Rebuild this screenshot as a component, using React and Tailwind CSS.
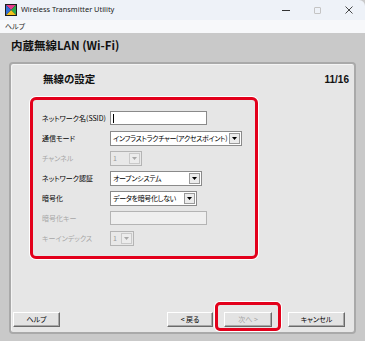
import React from "react";

const jp = "font-['Noto_Sans_CJK_JP','Noto_Sans',sans-serif] [font-feature-settings:'palt']";

const AppIcon = () => (
  <svg width="12" height="12" viewBox="0 0 12 12">
    <rect x="0" y="0" width="12" height="12" fill="#1b1b1b" />
    <polygon points="1,1 11,1 6,6" fill="#e83a8c" />
    <polygon points="11,1 11,11 6,6" fill="#2aa84a" />
    <polygon points="11,11 1,11 6,6" fill="#f2c21b" />
    <polygon points="1,11 1,1 6,6" fill="#2e6fd8" />
  </svg>
);

const Arrow = ({ disabled }) => (
  <span
    className={`ml-auto flex h-[11px] w-[11px] shrink-0 items-center justify-center border ${
      disabled ? "border-[#c9c9c9] bg-[#ececec]" : "border-[#9a9a9a] bg-[#ececec]"
    }`}
  >
    <svg width="5" height="3" viewBox="0 0 5 3">
      <polygon points="0,0 5,0 2.5,3" fill={disabled ? "#a8a8a8" : "#000"} />
    </svg>
  </span>
);

const Select = ({ value, width, disabled }) => (
  <div
    className={`flex h-[15px] items-center overflow-hidden border pl-[2px] pr-[1px] text-[7px] leading-none ${
      disabled
        ? "border-[#b4b4b4] bg-[#e8e8e8] text-[#9a9a9a]"
        : "border-[#8a8a8a] bg-white text-black"
    }`}
    style={{ width }}
  >
    <span className="min-w-0 whitespace-nowrap tracking-[-0.35px]">{value}</span>
    <Arrow disabled={disabled} />
  </div>
);

const Input = ({ disabled }) => (
  <div
    className={`h-[14px] w-[97px] border ${
      disabled ? "border-[#b4b4b4] bg-[#efefef]" : "border-[#8a8a8a] bg-white"
    } flex items-center pl-[2px]`}
  >
    {!disabled && <span className="h-[9px] w-px bg-black" />}
  </div>
);

const rows = [
  { label: "ネットワーク名(SSID)", ctrl: <Input /> },
  { label: "通信モード", ctrl: <Select value="インフラストラクチャー(アクセスポイント)" width={132} /> },
  { label: "チャンネル", disabled: true, ctrl: <Select value="1" width={32} disabled /> },
  { label: "ネットワーク認証", ctrl: <Select value="オープンシステム" width={92} /> },
  { label: "暗号化", ctrl: <Select value="データを暗号化しない" width={87} /> },
  { label: "暗号化キー", disabled: true, ctrl: <Input disabled /> },
  { label: "キーインデックス", disabled: true, ctrl: <Select value="1" width={24} disabled /> },
];

const Button = ({ children, width, disabled }) => (
  <div
    className={`flex h-[15px] items-center justify-center border-t border-l border-b border-r border-t-white border-l-white border-b-[#6a6a6a] border-r-[#6a6a6a] bg-[#e3e3e3] text-[7px] leading-none shadow-[inset_-1px_-1px_0_#a8a8a8] ${jp} ${
      disabled ? "text-[#a3a3a3]" : "text-black"
    }`}
    style={{ width }}
  >
    {children}
  </div>
);

export default function App() {
  return (
    <div className="flex h-[341px] w-[365px] flex-col overflow-hidden bg-[#c9c9c9]">
      {/* title bar */}
      <div className="flex h-[20px] items-center rounded-tr-[6px] bg-[#eef2f8] pl-[5px] font-['Noto_Sans',sans-serif] text-[7.4px] text-[#1a1a1a]">
        <AppIcon />
        <span className="ml-[4px]">Wireless Transmitter Utility</span>
        <div className="ml-auto flex h-full items-center">
          <span className="mr-[24px] h-px w-[8px] bg-[#333]" />
          <span className="mr-[24px] h-[7px] w-[7px] rounded-[1px] border border-[#c4c4c4]" />
          <svg width="8" height="8" viewBox="0 0 8 8" className="mr-[12px]">
            <path d="M0.5 0.5 L7.5 7.5 M7.5 0.5 L0.5 7.5" stroke="#333" strokeWidth="0.9" />
          </svg>
        </div>
      </div>

      {/* menu bar */}
      <div className={`flex h-[13px] items-center bg-[#f7f8fa] pl-[5px] text-[7px] text-[#222] ${jp}`}>
        ヘルプ
      </div>

      {/* header */}
      <div className={`flex h-[29px] items-center pb-[3px] pl-[11px] text-[11.5px] font-bold text-[#111] ${jp}`}>
        内蔵無線LAN (Wi-Fi)
      </div>

      {/* wizard panel */}
      <div className="mx-[9px] mb-[7px] flex flex-1 flex-col rounded-[4px] border-2 border-[#a9a9a9] bg-[#e6e6e6] shadow-[inset_1px_1px_0_#f4f4f4]">
        <div className="mt-[8px] flex h-[14px] items-center pl-[32px] pr-[5px]">
          <span className={`text-[10.5px] font-bold text-[#111] ${jp}`}>無線の設定</span>
          <span className="ml-auto font-['Liberation_Sans',sans-serif] text-[10px] font-bold text-[#111]">
            11/16
          </span>
        </div>

        <div className="ml-[19px] mt-[11px] flex h-[162px] w-[228px] flex-col rounded-[6px] border-[3px] border-[#e3001b] pl-[9px] pt-[8px] shadow-[0_0_0_1px_#ffffff]">
          {rows.map((r) => (
            <div key={r.label} className="flex h-[20px] items-center">
              <span
                className={`w-[68px] whitespace-nowrap text-[7px] leading-none ${jp} ${
                  r.disabled ? "text-[#a6a6a6]" : "text-black"
                }`}
              >
                {r.label}
              </span>
              <div className={jp}>{r.ctrl}</div>
            </div>
          ))}
        </div>

        <div className="mt-auto mb-[5px] flex items-center pl-[2px] pr-[9px]">
          <Button width={47}>ヘルプ</Button>
          <div className="ml-auto">
            <Button width={46}>&lt; 戻る</Button>
          </div>
          <div className="relative ml-[11px]">
            <Button width={48} disabled>
              次へ &gt;
            </Button>
            <div className="absolute -left-[9px] -right-[9px] -top-[10px] -bottom-[4px] rounded-[5px] border-[3px] border-[#e3001b] shadow-[0_0_0_1px_#ffffff]" />
          </div>
          <div className="ml-[16px]">
            <Button width={57}>キャンセル</Button>
          </div>
        </div>
      </div>
    </div>
  );
}
